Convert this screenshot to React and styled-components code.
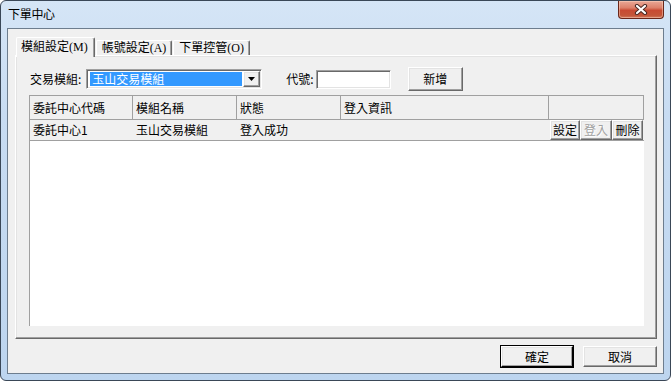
import React from "react";
import styled, { createGlobalStyle, css } from "styled-components";

const GlobalStyle = createGlobalStyle`
  html, body { margin: 0; padding: 0; background: #ffffff; }
  body {
    font-family: "Noto Sans CJK TC", "Noto Sans", sans-serif;
    font-size: 12px;
    color: #000;
  }
  * { box-sizing: border-box; }
`;

const raised = css`
  border-top: 1px solid #ffffff;
  border-left: 1px solid #ffffff;
  border-right: 1px solid #696969;
  border-bottom: 1px solid #696969;
  box-shadow: inset -1px -1px 0 #a0a0a0, inset 1px 1px 0 #e3e3e3;
`;

const Window = styled.div`
  width: 671px;
  height: 381px;
  border: 1px solid #3a4757;
  border-radius: 6px;
  background: linear-gradient(to bottom, #d5e5f6 0%, #c8dcf2 30%, #bdd5ef 100%);
  display: flex;
  flex-direction: column;
  overflow: hidden;
`;

const TitleBar = styled.div`
  height: 27px;
  flex: none;
  display: flex;
  align-items: flex-start;
  justify-content: space-between;
  padding: 0 6px 0 7px;
`;

const Title = styled.div`
  margin-top: 6px;
  font-size: 12px;
  line-height: 14px;
  color: #000;
  letter-spacing: -0.3px;
`;

const CloseButton = styled.div`
  width: 46px;
  height: 18px;
  border: 1px solid #6a2619;
  border-top: none;
  border-radius: 0 0 4px 4px;
  background: linear-gradient(to bottom, #e9a896 0%, #dc806a 40%, #c84a32 55%, #c45639 85%, #d27a5f 100%);
  box-shadow: inset 0 0 0 1px rgba(255, 220, 200, 0.45);
  display: flex;
  align-items: center;
  justify-content: center;
`;

const Client = styled.div`
  flex: 1;
  margin: 0 6px 6px 6px;
  border: 1px solid #6d7d8e;
  background: #f0f0f0;
  padding: 8px 6px 6px 7px;
  display: flex;
  flex-direction: column;
`;

const TabStrip = styled.div`
  height: 18px;
  flex: none;
  display: flex;
  align-items: flex-end;
  padding-left: 1px;
`;

const Tab = styled.div`
  position: relative;
  background: #f0f0f0;
  border-top: 1px solid #ffffff;
  border-left: 1px solid #ffffff;
  border-right: 1px solid #696969;
  box-shadow: inset -1px 0 0 #a0a0a0;
  border-radius: 2px 2px 0 0;
  display: flex;
  align-items: center;
  font-family: "Liberation Serif", "Noto Sans CJK TC", serif;
  font-size: 12px;
  line-height: 14px;
  white-space: nowrap;
  ${(p) =>
    p.$active
      ? css`
          height: 20px;
          margin-bottom: -2px;
          z-index: 1;
          padding: 0 6px 2px 4px;
        `
      : css`
          height: 15px;
          margin-left: 1px;
          padding: 0 5px 0 5px;
        `}
`;

const Panel = styled.div`
  flex: 1;
  border-top: 1px solid #ffffff;
  border-left: 1px solid #ffffff;
  border-right: 1px solid #696969;
  border-bottom: 1px solid #696969;
  box-shadow: inset -1px -1px 0 #a0a0a0, inset 1px 1px 0 #e3e3e3;
  padding: 11px 12px 12px 13px;
  display: flex;
  flex-direction: column;
  gap: 4px;
`;

const FormRow = styled.div`
  height: 24px;
  display: flex;
  align-items: center;
`;

const Label = styled.span`
  margin-left: ${(p) => p.$ml || 0}px;
  line-height: 14px;
  white-space: nowrap;
`;

const sunken = css`
  border-top: 1px solid #a0a0a0;
  border-left: 1px solid #a0a0a0;
  border-right: 1px solid #ffffff;
  border-bottom: 1px solid #ffffff;
  box-shadow: inset 1px 1px 0 #696969, inset -1px -1px 0 #e3e3e3;
`;

const Combo = styled.div`
  ${sunken};
  margin-left: 5px;
  width: 176px;
  height: 20px;
  background: #ffffff;
  display: flex;
  align-items: stretch;
  padding: 1px 1px 1px 2px;
`;

const ComboValue = styled.div`
  flex: 1;
  margin: 1px 1px 1px 1px;
  background: #3399ff;
  color: #ffffff;
  font-size: 12px;
  line-height: 14px;
  height: 14px;
  padding-left: 2px;
  white-space: nowrap;
  overflow: visible;
`;

const DropButton = styled.div`
  ${raised};
  width: 17px;
  display: flex;
  align-items: center;
  justify-content: center;
  background: #f0f0f0;
`;

const TextInput = styled.div`
  ${sunken};
  margin-left: 2px;
  width: 75px;
  height: 19px;
  background: #ffffff;
`;

const PushButton = styled.button`
  ${raised};
  appearance: none;
  margin: 0 0 0 ${(p) => p.$ml || 0}px;
  padding: 0;
  width: ${(p) => p.$w}px;
  height: ${(p) => p.$h}px;
  background: #f0f0f0;
  font-family: inherit;
  font-size: 12px;
  line-height: 14px;
  color: ${(p) => (p.$disabled ? "#a0a0a0" : "#000")};
  text-shadow: ${(p) => (p.$disabled ? "1px 1px 0 #ffffff" : "none")};
  ${(p) =>
    p.$default &&
    css`
      outline: 1px solid #000;
      outline-offset: 0;
      border-right-color: #000;
      border-bottom-color: #000;
    `}
`;

const Grid = styled.div`
  flex: 1;
  background: #ffffff;
  border-top: 1px solid #a0a0a0;
  border-left: 1px solid #a0a0a0;
  display: flex;
  flex-direction: column;
`;

const cols = "103px 104px 104px 208px 95px";

const HeaderRow = styled.div`
  display: grid;
  grid-template-columns: ${cols};
  height: 24px;
`;

const HeaderCell = styled.div`
  background: #f0f0f0;
  border-right: 1px solid #a0a0a0;
  border-bottom: 1px solid #a0a0a0;
  padding-left: 3px;
  display: flex;
  align-items: center;
  line-height: 14px;
  white-space: nowrap;
`;

const DataRow = styled.div`
  display: grid;
  grid-template-columns: ${cols};
  height: 21px;
  width: 614px;
  background: #f0f0f0;
  border-bottom: 1px solid #a0a0a0;
`;

const DataCell = styled.div`
  padding-left: 3px;
  display: flex;
  align-items: center;
  line-height: 14px;
  white-space: nowrap;
`;

const ActionCell = styled.div`
  display: flex;
  padding-left: 1px;
`;

const ButtonBar = styled.div`
  flex: none;
  margin-top: 7px;
  display: flex;
  justify-content: flex-end;
  gap: 10px;
`;

function CloseGlyph() {
  return (
    <svg width="14" height="11" viewBox="0 0 14 11">
      <g strokeLinecap="round">
        <line x1="3" y1="2" x2="11" y2="9" stroke="#4b2a24" strokeWidth="4.2" />
        <line x1="11" y1="2" x2="3" y2="9" stroke="#4b2a24" strokeWidth="4.2" />
        <line x1="3" y1="2" x2="11" y2="9" stroke="#ffffff" strokeWidth="2.2" />
        <line x1="11" y1="2" x2="3" y2="9" stroke="#ffffff" strokeWidth="2.2" />
      </g>
    </svg>
  );
}

function DownArrow() {
  return (
    <svg width="7" height="4" viewBox="0 0 7 4">
      <polygon points="0,0 7,0 3.5,4" fill="#000" />
    </svg>
  );
}

const headers = ["委託中心代碼", "模組名稱", "狀態", "登入資訊", ""];

export default function App() {
  return (
    <>
      <GlobalStyle />
      <Window>
        <TitleBar>
          <Title>下單中心</Title>
          <CloseButton>
            <CloseGlyph />
          </CloseButton>
        </TitleBar>
        <Client>
          <TabStrip>
            <Tab $active>模組設定(M)</Tab>
            <Tab>帳號設定(A)</Tab>
            <Tab>下單控管(O)</Tab>
          </TabStrip>
          <Panel>
            <FormRow>
              <Label $ml={1}>交易模組:</Label>
              <Combo>
                <ComboValue>玉山交易模組</ComboValue>
                <DropButton>
                  <DownArrow />
                </DropButton>
              </Combo>
              <Label $ml={24}>代號:</Label>
              <TextInput />
              <PushButton $ml={17} $w={55} $h={24}>
                新增
              </PushButton>
            </FormRow>
            <Grid>
              <HeaderRow>
                {headers.map((h, i) => (
                  <HeaderCell key={i}>{h}</HeaderCell>
                ))}
              </HeaderRow>
              <DataRow>
                <DataCell>委託中心1</DataCell>
                <DataCell>玉山交易模組</DataCell>
                <DataCell>登入成功</DataCell>
                <DataCell />
                <ActionCell>
                  <PushButton $w={30} $h={20}>設定</PushButton>
                  <PushButton $w={32} $h={20} $disabled>登入</PushButton>
                  <PushButton $w={31} $h={20}>刪除</PushButton>
                </ActionCell>
              </DataRow>
            </Grid>
          </Panel>
          <ButtonBar>
            <PushButton $w={72} $h={21} $default>
              確定
            </PushButton>
            <PushButton $w={74} $h={21}>
              取消
            </PushButton>
          </ButtonBar>
        </Client>
      </Window>
    </>
  );
}
